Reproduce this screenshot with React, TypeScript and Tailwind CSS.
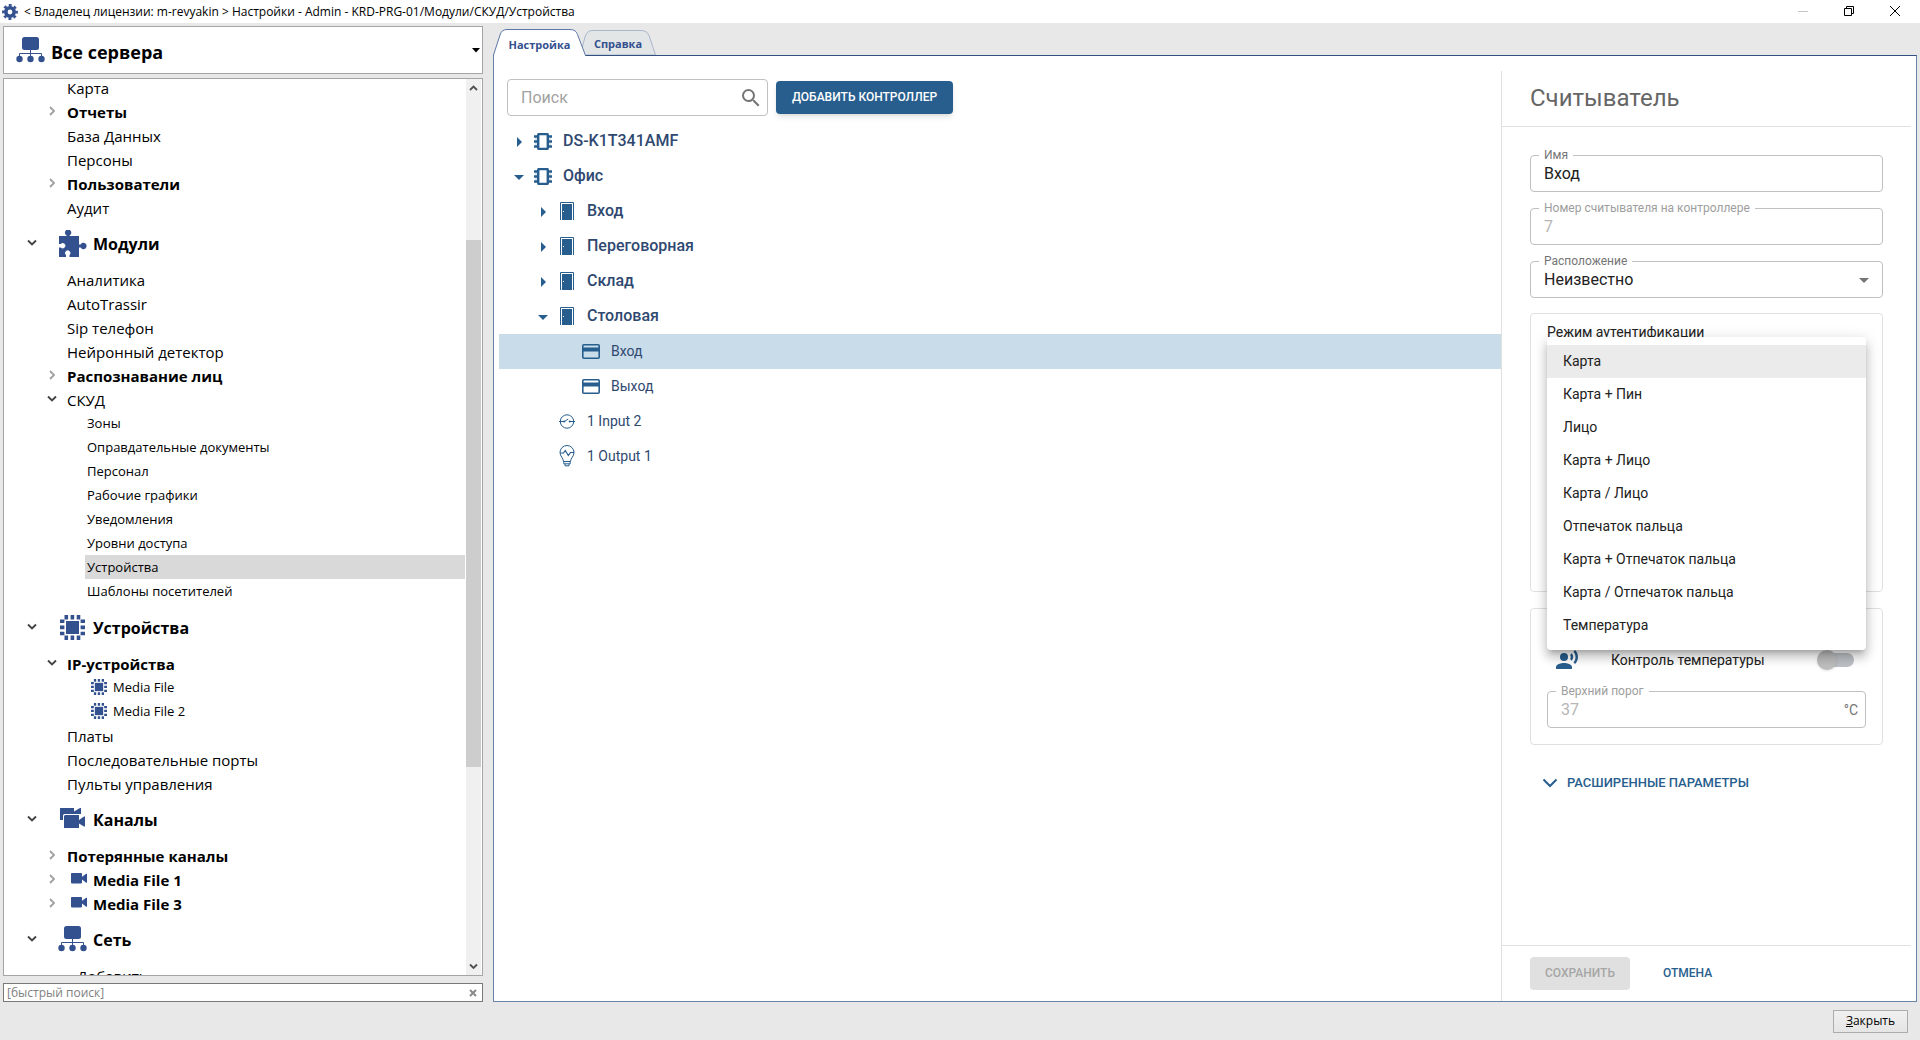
import React, { useState } from "react";
import { clsx } from "clsx";
import { MdArrowDropDown, MdArrowRight, MdRecordVoiceOver, MdSearch } from "react-icons/md";

type NavIcon = "puzzle" | "chip" | "cameras" | "camera" | "network";

interface INavItem {
    label: string;
    kind: "group" | "item" | "sub" | "device" | "camera" | "action";
    icon?: NavIcon;
    bold?: boolean;
    arrow?: "open" | "closed";
}

interface IDevice {
    id: number;
    label: string;
    level: 0 | 1 | 2;
    icon: "controller" | "door" | "reader" | "input" | "output";
    arrow?: "open" | "closed";
}

const navItems: INavItem[] = [
    { label: "Карта", kind: "item" },
    { label: "Отчеты", kind: "item", bold: true, arrow: "closed" },
    { label: "База Данных", kind: "item" },
    { label: "Персоны", kind: "item" },
    { label: "Пользователи", kind: "item", bold: true, arrow: "closed" },
    { label: "Аудит", kind: "item" },
    { label: "Модули", kind: "group", icon: "puzzle", arrow: "open" },
    { label: "Аналитика", kind: "item" },
    { label: "AutoTrassir", kind: "item" },
    { label: "Sip телефон", kind: "item" },
    { label: "Нейронный детектор", kind: "item" },
    { label: "Распознавание лиц", kind: "item", bold: true, arrow: "closed" },
    { label: "СКУД", kind: "item", arrow: "open" },
    { label: "Зоны", kind: "sub" },
    { label: "Оправдательные документы", kind: "sub" },
    { label: "Персонал", kind: "sub" },
    { label: "Рабочие графики", kind: "sub" },
    { label: "Уведомления", kind: "sub" },
    { label: "Уровни доступа", kind: "sub" },
    { label: "Устройства", kind: "sub" },
    { label: "Шаблоны посетителей", kind: "sub" },
    { label: "Устройства", kind: "group", icon: "chip", arrow: "open" },
    { label: "IP-устройства", kind: "item", bold: true, arrow: "open" },
    { label: "Media File", kind: "device", icon: "chip" },
    { label: "Media File 2", kind: "device", icon: "chip" },
    { label: "Платы", kind: "item" },
    { label: "Последовательные порты", kind: "item" },
    { label: "Пульты управления", kind: "item" },
    { label: "Каналы", kind: "group", icon: "cameras", arrow: "open" },
    { label: "Потерянные каналы", kind: "item", bold: true, arrow: "closed" },
    { label: "Media File 1", kind: "camera", icon: "camera", bold: true, arrow: "closed" },
    { label: "Media File 3", kind: "camera", icon: "camera", bold: true, arrow: "closed" },
    { label: "Сеть", kind: "group", icon: "network", arrow: "open" },
    { label: "Добавить", kind: "action" },
];

const devices: IDevice[] = [
    { id: 1, label: "DS-K1T341AMF", level: 0, icon: "controller", arrow: "closed" },
    { id: 2, label: "Офис", level: 0, icon: "controller", arrow: "open" },
    { id: 3, label: "Вход", level: 1, icon: "door", arrow: "closed" },
    { id: 4, label: "Переговорная", level: 1, icon: "door", arrow: "closed" },
    { id: 5, label: "Склад", level: 1, icon: "door", arrow: "closed" },
    { id: 6, label: "Столовая", level: 1, icon: "door", arrow: "open" },
    { id: 7, label: "Вход", level: 2, icon: "reader" },
    { id: 8, label: "Выход", level: 2, icon: "reader" },
    { id: 9, label: "1 Input 2", level: 1, icon: "input" },
    { id: 10, label: "1 Output 1", level: 1, icon: "output" },
];

const authModes = [
    "Карта",
    "Карта + Пин",
    "Лицо",
    "Карта + Лицо",
    "Карта / Лицо",
    "Отпечаток пальца",
    "Карта + Отпечаток пальца",
    "Карта / Отпечаток пальца",
    "Температура",
];

const GearIcon = () => (
    <svg width="16" height="16" viewBox="0 0 16 16" fill="none" stroke="#33508f">
        <circle cx="8" cy="8" r="4.2" strokeWidth="3.6" />
        <circle cx="8" cy="8" r="6.7" strokeWidth="2.4" strokeDasharray="2.9 2.362" strokeDashoffset="1.45" />
    </svg>
);

const NetworkIcon = () => (
    <svg width="29" height="26" viewBox="0 0 29 26" fill="#33508f">
        <rect x="6" y="0" width="17" height="13" rx="2.5" />
        <path d="M3.5 21v-4.5h22V21M14.5 12v9" fill="none" stroke="#33508f" strokeWidth="1" />
        <circle cx="3.5" cy="22" r="3.2" />
        <circle cx="14.5" cy="22" r="3.2" />
        <circle cx="25.5" cy="22" r="3.2" />
    </svg>
);

const PuzzleIcon = () => (
    <svg width="28" height="27" viewBox="0 0 28 27" fill="#33508f">
        <path d="M0 6h7.600V5.500a3.200 3.200 0 1 1 3 0V6H20v8.500h1.600a3.200 3.200 0 1 1 0 3H20V27h-9.500v-2a2.600 2.600 0 1 0-3.500 0v2H0v-9.500h1.800a2.600 2.600 0 1 0 0-3.600H0z" />
    </svg>
);

const ChipIcon = ({ size }: { size: number }) => (
    <svg width={size} height={size} viewBox="0 0 25 25" fill="#33508f">
        <rect x="6" y="6" width="13" height="13" />
        <path
            d="M4.500 2.200h15.800M4.500 22.800h15.800"
            stroke="#33508f"
            strokeWidth="4.400"
            strokeDasharray="3.600 2.500"
        />
        <path
            d="M2.200 4.500v15.800M22.800 4.500v15.800"
            stroke="#33508f"
            strokeWidth="4.400"
            strokeDasharray="3.600 2.500"
        />
    </svg>
);

const CameraIcon = () => (
    <svg width="16" height="12" viewBox="0 0 16 12" fill="#33508f">
        <path d="M.8 0h9.400a.8.8 0 0 1 .8.8V3.800L15.200.7H16v9h-.8L11 6.600v3a.8.8 0 0 1-.8.800H.8a.8.8 0 0 1-.8-.8V.8A.8.8 0 0 1 .8 0z" />
    </svg>
);

const CamerasIcon = () => (
    <svg width="25" height="22" viewBox="0 0 25 22" fill="#33508f">
        <path d="M0 0h14v3.500L20 0h1v6H4.500A1.500 1.500 0 0 0 3 7.500V12H0z" />
        <path d="M5 7h14v5l5-3.500h1v10h-1L19 15.500V20H4V8z" />
    </svg>
);

const ControllerIcon = () => (
    <svg width="18" height="17" viewBox="0 0 18 17" fill="none" stroke="#275e8e">
        <rect x="4.200" y="1" width="9.600" height="15" rx="1" strokeWidth="2.400" />
        <path
            d="M0 3.500h4M0 8.500h4M0 13.500h4M14 3.500h4M14 8.500h4M14 13.500h4"
            strokeWidth="2.600"
        />
        <path d="M1 6h2M1 11h2M15 6h2M15 11h2" strokeWidth="1" opacity=".35" />
    </svg>
);

const DoorIcon = () => (
    <svg width="14" height="19" viewBox="0 0 14 19">
        <path d="M.5 18V.5h13V18" fill="none" stroke="#275e8e" />
        <rect x="2" y="2" width="10" height="16" fill="#275e8e" />
        <rect x="3" y="9" width="1" height="1" fill="#fff" />
    </svg>
);

const ReaderIcon = () => (
    <svg width="18" height="15" viewBox="0 0 18 15">
        <rect x=".8" y=".8" width="16.400" height="13.400" rx="1" fill="none" stroke="#275e8e" strokeWidth="1.600" />
        <rect x="1" y="3.500" width="16" height="4" fill="#275e8e" />
    </svg>
);

const InputIcon = () => (
    <svg width="16" height="17" viewBox="0 0 16 17" fill="none" stroke="#275e8e">
        <circle cx="8" cy="8.500" r="6.700" />
        <path d="M0 8.500h5M11 8.500h5M5.500 8.500l3.700-2.500" />
        <circle cx="5.200" cy="8.500" r="1.100" fill="#275e8e" stroke="none" />
        <circle cx="10.800" cy="8.500" r="1.100" fill="#275e8e" stroke="none" />
    </svg>
);

const OutputIcon = () => (
    <svg width="16" height="23" viewBox="0 0 16 23" fill="none" stroke="#275e8e">
        <path d="M4.500 16.500C4.500 13 1 11.500 1 7.500a7 7 0 0 1 14 0c0 4-3.500 5.500-3.500 9zM4.800 16.500v2.300h6.400v-2.300M6 19v1.800h4V19" />
        <path d="M1 8h3.500l1.800-2.500 3 5L11.500 7.500H15" strokeWidth="1.200" />
    </svg>
);

const TreeChevron = ({ state }: { state: "open" | "closed" }) => (
    <svg width="10" height="10" viewBox="0 0 10 10" fill="none">
        {state === "open" ? (
            <path d="M1 2.500l4 4 4-4" stroke="#444" strokeWidth="1.900" />
        ) : (
            <path d="M3 1l4 4-4 4" stroke="#a0a0a0" strokeWidth="1.800" />
        )}
    </svg>
);

const navIcon = (item: INavItem) => {
    switch (item.icon) {
        case "puzzle":
            return <PuzzleIcon />;
        case "chip":
            return <ChipIcon size={item.kind === "group" ? 25 : 16} />;
        case "cameras":
            return <CamerasIcon />;
        case "camera":
            return <CameraIcon />;
        case "network":
            return <NetworkIcon />;
        default:
            return null;
    }
};

const NavRow = ({ item, selected, onSelect }: { item: INavItem; selected: boolean; onSelect: () => void }) => {
    if (item.kind === "group") {
        return (
            <button type="button" onClick={onSelect} className="flex h-12 w-full items-center pl-[23px] text-left">
                <span className="w-[31px]">{item.arrow && <TreeChevron state={item.arrow} />}</span>
                <span className="flex w-[29px] justify-center">{navIcon(item)}</span>
                <span className="pt-0.5 pl-[6px] text-base font-bold">{item.label}</span>
            </button>
        );
    }

    if (item.kind === "sub") {
        return (
            <div className="pl-[81px]">
                <button
                    type="button"
                    onClick={onSelect}
                    className={clsx("flex h-6 w-full items-center pl-[2px] text-left text-[13px]", selected && "bg-[#d9d9d9]")}
                >
                    <span className="pt-0.5">{item.label}</span>
                </button>
            </div>
        );
    }

    return (
        <button
            type="button"
            onClick={onSelect}
            className={clsx(
                "flex h-6 w-full items-center pl-[43px] text-left",
                item.kind === "device" ? "text-[13px]" : "text-[15px]",
                item.bold && "font-bold"
            )}
        >
            <span className="w-5">{item.arrow && <TreeChevron state={item.arrow} />}</span>
            {item.kind === "camera" && <span className="w-[26px] pl-1">{navIcon(item)}</span>}
            {item.kind === "device" && <span className="w-[46px] pl-6">{navIcon(item)}</span>}
            <span className={clsx("pt-0.5", item.kind === "action" && "pl-[10px]")}>{item.label}</span>
        </button>
    );
};

const deviceIcon = (icon: IDevice["icon"]) => {
    switch (icon) {
        case "controller":
            return <ControllerIcon />;
        case "door":
            return <DoorIcon />;
        case "reader":
            return <ReaderIcon />;
        case "input":
            return <InputIcon />;
        default:
            return <OutputIcon />;
    }
};

const DeviceRow = ({ device, selected, onSelect }: { device: IDevice; selected: boolean; onSelect: () => void }) => (
    <button
        type="button"
        onClick={onSelect}
        className={clsx(
            "flex h-[35px] w-full items-center text-left text-[#2f4870]",
            device.level === 0 && "pl-2",
            device.level === 1 && "pl-8",
            device.level === 2 && "pl-14",
            device.arrow ? "text-base font-medium" : "text-sm",
            selected && "bg-[#c9dcea]"
        )}
    >
        <span className="w-6 text-[#275e8e]">
            {device.arrow === "open" && <MdArrowDropDown size={24} />}
            {device.arrow === "closed" && <MdArrowRight size={24} />}
        </span>
        <span className="flex w-6 justify-center">{deviceIcon(device.icon)}</span>
        <span className="pb-px pl-2">{device.label}</span>
    </button>
);

interface FieldProps {
    id: string;
    label: string;
    disabled?: boolean;
    children: React.ReactNode;
}

const Field: React.FC<FieldProps> = ({ id, label, disabled, children }) => (
    <div className="relative h-[37px] shrink-0 rounded border border-[#c0c0c0]">
        <label
            htmlFor={id}
            className={clsx(
                "absolute -top-[9px] left-2 bg-white px-[5px] text-xs leading-4",
                disabled ? "text-[#9e9e9e]" : "text-[#757575]"
            )}
        >
            {label}
        </label>
        {children}
    </div>
);

const App: React.FC = () => {
    const [selectedNav, setSelectedNav] = useState<number>(19);
    const [selectedDevice, setSelectedDevice] = useState<number>(7);
    const [name, setName] = useState<string>("Вход");
    const [search, setSearch] = useState<string>("");
    const [quickSearch, setQuickSearch] = useState<string>("");
    const [authMode, setAuthMode] = useState<string>("Карта");

    return (
        <div className="flex h-screen w-full flex-col overflow-hidden bg-[#e8e8e8] font-['Open_Sans',sans-serif] text-black">
            {/* заголовок окна */}
            <header className="flex h-[23px] shrink-0 items-center bg-white pr-[2px] pl-[2px]">
                <GearIcon />
                <h1 className="flex-1 pl-[6px] text-xs">
                    &lt; Владелец лицензии: m-revyakin &gt; Настройки - Admin - KRD-PRG-01/Модули/СКУД/Устройства
                </h1>
                <button type="button" aria-label="Свернуть" className="flex w-[46px] justify-center">
                    <svg width="10" height="11" viewBox="0 0 10 11"><path d="M0 5.500h10" stroke="#c4c4c4" /></svg>
                </button>
                <button type="button" aria-label="Восстановить" className="flex w-[46px] justify-center">
                    <svg width="10" height="11" viewBox="0 0 10 11" fill="none" stroke="#000">
                        <path d="M.5 2.500h7v7h-7zM2.500 2.500v-2h7v7h-2" />
                    </svg>
                </button>
                <button type="button" aria-label="Закрыть окно" className="flex w-[46px] justify-center">
                    <svg width="10" height="11" viewBox="0 0 10 11" stroke="#000"><path d="M0 0l10 10M10 0L0 10" /></svg>
                </button>
            </header>

            <div className="flex min-h-0 flex-1 gap-[10px] pr-[3px] pl-[3px]">
                {/* левая панель */}
                <aside className="flex w-[480px] shrink-0 flex-col pt-[3px]">
                    <button
                        type="button"
                        className="flex h-12 shrink-0 items-center border border-[#a5a5a5] bg-white pr-[2px] pl-3 text-left"
                    >
                        <NetworkIcon />
                        <span className="flex-1 pt-[3px] pl-[6px] text-lg font-bold">Все сервера</span>
                        <svg width="8" height="6" viewBox="0 0 8 6"><path d="M0 1h8L4 5.500z" /></svg>
                    </button>

                    <div className="mt-1 flex min-h-0 flex-1 border border-[#a5a5a5] bg-white pr-px">
                        <nav className="min-w-0 flex-1 overflow-hidden pr-px">
                            <div className="-mt-1">
                                {navItems.map((item, i) => (
                                    <NavRow
                                        key={i}
                                        item={item}
                                        selected={i === selectedNav}
                                        onSelect={() => setSelectedNav(i)}
                                    />
                                ))}
                            </div>
                        </nav>
                        <div className="flex w-[15px] shrink-0 flex-col items-center bg-[#f0f0f0]">
                            <svg width="9" height="17" viewBox="0 0 9 17" fill="none" stroke="#505050" strokeWidth="1.800">
                                <path d="M1 11l3.500-3.500L8 11" />
                            </svg>
                            <div className="w-full flex-[144]" />
                            <div className="w-full flex-[527] bg-[#cdcdcd]" />
                            <div className="w-full flex-[191]" />
                            <svg width="9" height="17" viewBox="0 0 9 17" fill="none" stroke="#505050" strokeWidth="1.800">
                                <path d="M1 6.500L4.500 10 8 6.500" />
                            </svg>
                        </div>
                    </div>

                    <div className="mt-[7px] flex h-[19px] shrink-0 items-center border border-[#7a7a7a] bg-white pr-[5px] pl-[3px]">
                        <input
                            type="text"
                            aria-label="Быстрый поиск"
                            value={quickSearch}
                            onChange={(e) => setQuickSearch(e.target.value)}
                            placeholder="[быстрый поиск]"
                            className="min-w-0 flex-1 text-xs outline-none placeholder:text-[#808080]"
                        />
                        <button type="button" aria-label="Очистить" onClick={() => setQuickSearch("")}>
                            <svg width="8" height="8" viewBox="0 0 8 8" stroke="#8a8a8a" strokeWidth="2">
                                <path d="M1 1l6 6M7 1L1 7" />
                            </svg>
                        </button>
                    </div>
                </aside>

                {/* рабочая область */}
                <main className="flex min-w-0 flex-1 flex-col pt-[6px]">
                    <div className="flex h-[26px] shrink-0 items-end text-[11px] font-bold text-[#33508f]">
                        <button type="button" className="relative z-10 -mb-px h-[27px] w-[93px] pt-[5px]">
                            <svg className="absolute inset-0" width="93" height="27" viewBox="0 0 93 27">
                                <path
                                    d="M.5 27v-1L7 6Q8.500.5 14 .5h63q6 0 7.500 5l8 21.500z"
                                    fill="#fff"
                                />
                                <path
                                    d="M.5 27v-1L7 6Q8.500.5 14 .5h63q6 0 7.500 5L92.500 26.500"
                                    fill="none"
                                    stroke="#5c77a6"
                                />
                            </svg>
                            <span className="relative">Настройка</span>
                        </button>
                        <button type="button" className="relative -ml-[6px] h-[25px] w-[76px] pt-1">
                            <svg className="absolute inset-0" width="76" height="25" viewBox="0 0 76 25">
                                <path
                                    d="M1 22L5 7Q7 .5 12 .5h49q6 0 8 5L75.500 25H6"
                                    fill="#e2e6e7"
                                    stroke="#a9b7cc"
                                />
                            </svg>
                            <span className="relative">Справка</span>
                        </button>
                    </div>

                    <div className="flex min-h-0 flex-1 border border-[#6b82ab] border-t-[#33507f] bg-white pr-[5px] pl-[5px] font-[Roboto,sans-serif]">
                        <section className="min-w-0 flex-1 pt-[23px]">
                            <div className="flex items-center gap-2 pb-2 pl-2">
                                <div className="flex h-[37px] w-[261px] items-center rounded border border-[#c0c0c0] pr-1 pl-[13px]">
                                    <input
                                        type="text"
                                        aria-label="Поиск"
                                        value={search}
                                        onChange={(e) => setSearch(e.target.value)}
                                        placeholder="Поиск"
                                        className="min-w-0 flex-1 text-base outline-none placeholder:text-[#a2a2a2]"
                                    />
                                    <MdSearch size={24} className="text-[#757575]" />
                                </div>
                                <button
                                    type="button"
                                    className="h-[33px] rounded bg-[#275e8e] px-4 pb-px text-xs font-medium text-white uppercase shadow-md"
                                >
                                    Добавить контроллер
                                </button>
                            </div>
                            {devices.map((device) => (
                                <DeviceRow
                                    key={device.id}
                                    device={device}
                                    selected={device.id === selectedDevice}
                                    onSelect={() => setSelectedDevice(device.id)}
                                />
                            ))}
                        </section>

                        <section className="mt-[15px] flex w-[410px] shrink-0 flex-col border-l border-[#e0e0e0]">
                            <h2 className="flex h-14 shrink-0 items-center border-b border-[#e0e0e0] pb-px pl-7 text-2xl text-[#666]">
                                Считыватель
                            </h2>

                            <div className="flex min-h-0 flex-1 flex-col pt-7 pr-7 pl-7">
                                <div className="flex flex-col gap-4 pb-[15px]">
                                    <Field id="name" label="Имя">
                                        <input
                                            id="name"
                                            type="text"
                                            value={name}
                                            onChange={(e) => setName(e.target.value)}
                                            className="h-full w-full px-[13px] text-base text-[#212121] outline-none"
                                        />
                                    </Field>
                                    <Field id="number" label="Номер считывателя на контроллере" disabled>
                                        <input
                                            id="number"
                                            type="text"
                                            defaultValue="7"
                                            disabled
                                            className="h-full w-full px-[13px] text-base text-[#b5b5b5]"
                                        />
                                    </Field>
                                    <Field id="location" label="Расположение">
                                        <select
                                            id="location"
                                            className="h-full w-full appearance-none px-[13px] text-base text-[#212121] outline-none"
                                        >
                                            <option>Неизвестно</option>
                                        </select>
                                        <MdArrowDropDown
                                            size={24}
                                            className="pointer-events-none absolute top-[6px] right-[6px] text-[#757575]"
                                        />
                                    </Field>
                                </div>

                                <div className="relative h-[279px] shrink-0 rounded border border-[#e0e0e0] px-4 pt-2 text-sm text-[#212121]">
                                    <span id="auth-mode">Режим аутентификации</span>
                                    <ul
                                        role="listbox"
                                        aria-labelledby="auth-mode"
                                        className="absolute top-[23px] right-4 left-4 z-10 rounded bg-white py-2 shadow-[0_5px_5px_-3px_rgba(0,0,0,0.2),0_8px_10px_1px_rgba(0,0,0,0.14),0_3px_14px_2px_rgba(0,0,0,0.12)]"
                                    >
                                        {authModes.map((mode) => (
                                            <li key={mode} role="option" aria-selected={mode === authMode}>
                                                <button
                                                    type="button"
                                                    onClick={() => setAuthMode(mode)}
                                                    className={clsx(
                                                        "block h-[33px] w-full px-4 pb-px text-left",
                                                        mode === authMode && "bg-[#ebebeb]"
                                                    )}
                                                >
                                                    {mode}
                                                </button>
                                            </li>
                                        ))}
                                    </ul>
                                </div>

                                <div className="mt-4 shrink-0 rounded border border-[#e0e0e0] px-4 pt-[31px] pb-4">
                                    <label className="flex h-10 items-center pr-3 pl-2 text-sm text-[#212121]">
                                        <MdRecordVoiceOver size={24} className="text-[#275e8e]" />
                                        <span className="flex-1 pl-8">Контроль температуры</span>
                                        <input type="checkbox" role="switch" disabled className="peer sr-only" />
                                        <span className="flex h-[14px] w-9 items-center rounded-full bg-[#bdc1c6]">
                                            <span className="-ml-px size-5 shrink-0 rounded-full bg-[#bdbdbd] shadow" />
                                        </span>
                                    </label>
                                    <div className="pt-[11px]">
                                        <Field id="threshold" label="Верхний порог" disabled>
                                            <div className="flex h-full items-center pr-[7px]">
                                                <input
                                                    id="threshold"
                                                    type="text"
                                                    defaultValue="37"
                                                    disabled
                                                    className="h-full min-w-0 flex-1 px-[13px] text-base text-[#b5b5b5]"
                                                />
                                                <span className="text-sm text-[#757575]">°C</span>
                                            </div>
                                        </Field>
                                    </div>
                                </div>

                                <button
                                    type="button"
                                    className="mt-[25px] flex h-[26px] items-center gap-[9px] pl-3 text-[13px] font-medium text-[#275e8e] uppercase"
                                >
                                    <svg width="16" height="10" viewBox="0 0 16 10" fill="none" stroke="#275e8e" strokeWidth="2">
                                        <path d="M1.500 1.500L8 8l6.500-6.500" />
                                    </svg>
                                    Расширенные параметры
                                </button>
                            </div>

                            <footer className="flex h-14 shrink-0 items-start border-t border-[#e0e0e0] pt-[11px] pl-7">
                                <button
                                    type="button"
                                    disabled
                                    className="h-[33px] w-[100px] rounded bg-[#e0e0e0] pb-px text-xs font-medium text-[#a6a6a6] uppercase"
                                >
                                    Сохранить
                                </button>
                                <button
                                    type="button"
                                    className="ml-[17px] h-[33px] px-4 pb-px text-xs font-medium text-[#275e8e] uppercase"
                                >
                                    Отмена
                                </button>
                            </footer>
                        </section>
                    </div>
                </main>
            </div>

            <footer className="flex h-[38px] shrink-0 items-center justify-end pr-3">
                <button
                    type="button"
                    className="h-[23px] w-[75px] border border-[#acacac] bg-linear-to-b from-[#f0f0f0] to-[#e5e5e5] text-xs"
                >
                    <span className="underline">З</span>акрыть
                </button>
            </footer>
        </div>
    );
};

export default App;
